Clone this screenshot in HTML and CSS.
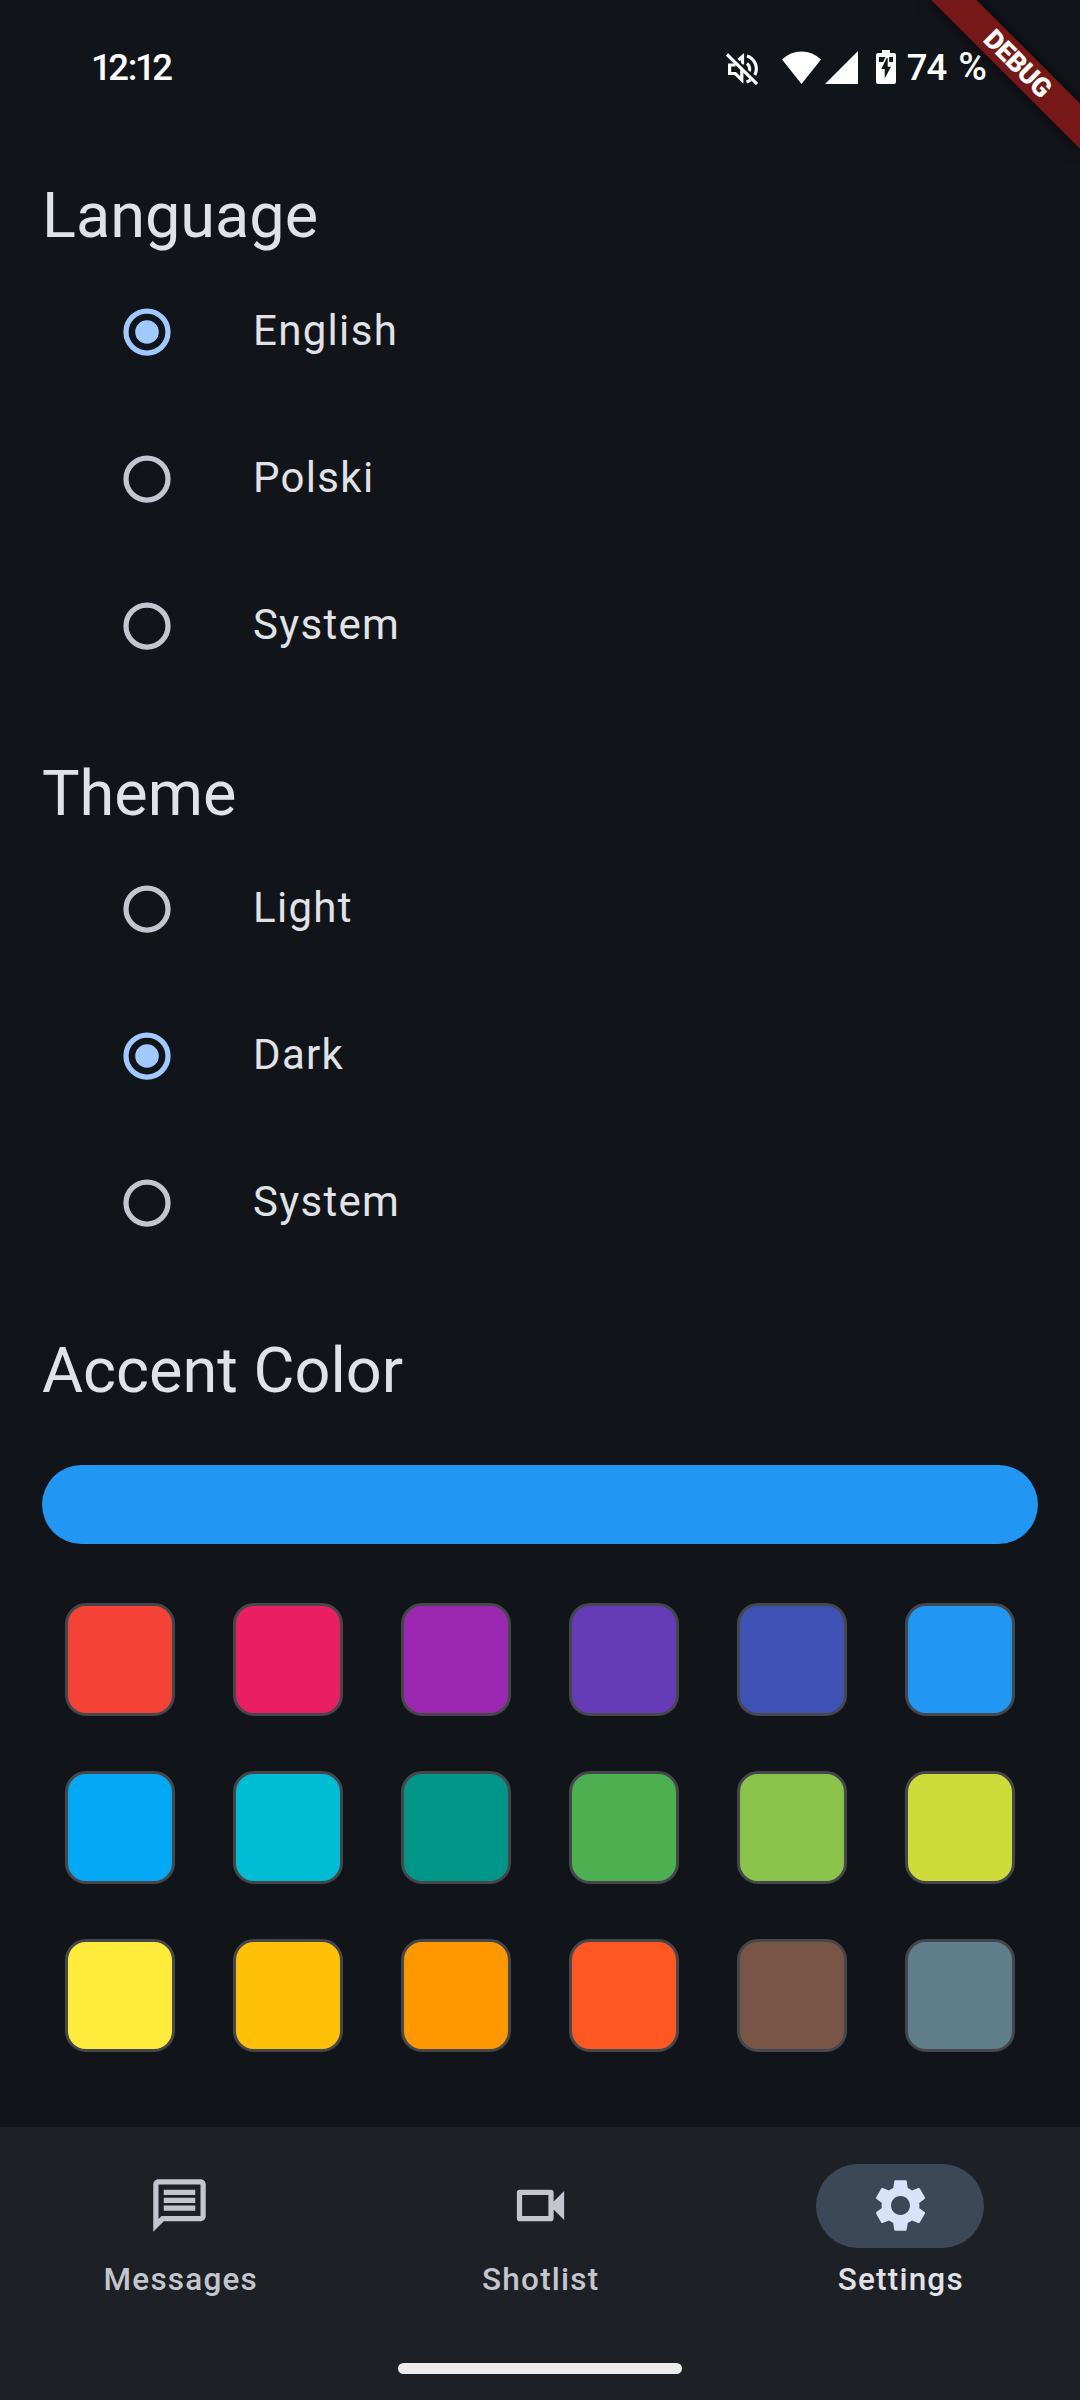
FILE: index.html
```html
<!DOCTYPE html>
<html lang="en">
<head>
<meta charset="utf-8">
<title>Settings</title>
<link rel="stylesheet" href="styles.css">
</head>
<body>
<svg width="0" height="0" class="symbols">
  <symbol id="radio-off" viewBox="0 0 48 48"><circle cx="24" cy="24" r="21" fill="none" stroke="#c3c6cf" stroke-width="5.25"/></symbol>
  <symbol id="radio-on" viewBox="0 0 48 48"><circle cx="24" cy="24" r="21" fill="none" stroke="#a0caff" stroke-width="5.25"/><circle cx="24" cy="24" r="11.8" fill="#a0caff"/></symbol>
</svg>
<div class="app">
  <header class="status">
    <span class="clock">12<span class="colon">:</span>12</span>
    <div class="status-icons">
      <svg class="mute" viewBox="0 0 32 32" fill="none" stroke="#fff" stroke-width="3.2">
        <path d="M9.500 12H3.600v8.500h5.700l6.500 6.500V16.500M12.500 7l4-3.500v8M21 10.500a7 7 0 0 1 2 8M21 3a13.500 13.500 0 0 1 7.800 19M20.500 29a14 14 0 0 0 4-2"/>
        <path d="M3 0l30 29.500" stroke="#111419" stroke-width="2.500"/>
        <path d="M1 1.500l30 29.500"/>
      </svg>
      <svg class="wifi" viewBox="0 0 39 33" fill="#fff"><path d="M0 8.500Q8.500 .5 19.500 .5T39 8.500L19.500 33z"/></svg>
      <svg class="signal" viewBox="0 0 33 33" fill="#fff"><path d="M33 0v33H0z"/></svg>
      <svg class="battery" viewBox="0 0 20 34"><path fill="#fff" d="M6 0h8v3h4a2 2 0 0 1 2 2v27a2 2 0 0 1-2 2H2a2 2 0 0 1-2-2V5a2 2 0 0 1 2-2h4z"/><path fill="#111419" d="M3 7h14v5H3z"/><path fill="#111419" stroke="#fff" stroke-width="3" paint-order="stroke" d="M10.700 8L5.300 19h3.400v9.500L15 16.700h-3.300V8z"/></svg>
      <span class="percent">74 <span class="sign">%</span></span>
    </div>
  </header>

  <main class="content">
    <section class="group">
      <h2>Language</h2>
      <label class="option"><svg class="radio"><use href="#radio-on"/></svg>English</label>
      <label class="option"><svg class="radio"><use href="#radio-off"/></svg>Polski</label>
      <label class="option"><svg class="radio"><use href="#radio-off"/></svg>System</label>
    </section>
    <section class="group">
      <h2>Theme</h2>
      <label class="option"><svg class="radio"><use href="#radio-off"/></svg>Light</label>
      <label class="option"><svg class="radio"><use href="#radio-on"/></svg>Dark</label>
      <label class="option"><svg class="radio"><use href="#radio-off"/></svg>System</label>
    </section>
    <section class="group">
      <h2>Accent Color</h2>
      <div class="preview"></div>
      <div class="swatches">
        <i class="red"></i><i class="pink"></i><i class="purple"></i><i class="deep-purple"></i><i class="indigo"></i><i class="blue"></i>
        <i class="light-blue"></i><i class="cyan"></i><i class="teal"></i><i class="green"></i><i class="light-green"></i><i class="lime"></i>
        <i class="yellow"></i><i class="amber"></i><i class="orange"></i><i class="deep-orange"></i><i class="brown"></i><i class="blue-grey"></i>
      </div>
    </section>
  </main>

  <nav class="nav">
    <div class="tabs">
      <a class="tab"><span class="pill"><svg viewBox="0 0 24 24"><path d="M4 4h16v12H5.170L4 17.170V4m0-2c-1.100 0-1.990.9-1.990 2L2 22l4-4h14c1.100 0 2-.9 2-2V4c0-1.100-.9-2-2-2H4zm2 10h12v2H6v-2zm0-3h12v2H6V9zm0-3h12v2H6V6z"/></svg></span><span class="label">Messages</span></a>
      <a class="tab"><span class="pill"><svg viewBox="0 0 24 24"><path d="M15 8v8H5V8h10m1-2H4c-.55 0-1 .45-1 1v10c0 .55.45 1 1 1h12c.55 0 1-.45 1-1v-3.500l4 4v-11l-4 4V7c0-.55-.45-1-1-1z"/></svg></span><span class="label">Shotlist</span></a>
      <a class="tab active"><span class="pill"><svg viewBox="0 0 24 24"><path d="M19.140 12.940c.04-.3.06-.61.06-.94 0-.32-.02-.64-.07-.94l2.030-1.580c.18-.14.23-.41.12-.61l-1.920-3.320c-.12-.22-.37-.29-.59-.22l-2.390.96c-.5-.38-1.030-.7-1.620-.94l-.36-2.540c-.04-.24-.24-.41-.48-.41h-3.840c-.24 0-.43.17-.47.41l-.36 2.540c-.59.24-1.130.57-1.620.94l-2.390-.96c-.22-.08-.47 0-.59.22L2.740 8.870c-.12.21-.08.47.12.61l2.030 1.580c-.05.3-.09.63-.09.94s.02.64.07.94l-2.030 1.580c-.18.14-.23.41-.12.61l1.920 3.320c.12.22.37.29.59.22l2.390-.96c.5.38 1.030.7 1.620.94l.36 2.540c.05.24.24.41.48.41h3.840c.24 0 .44-.17.47-.41l.36-2.540c.59-.24 1.130-.56 1.620-.94l2.390.96c.22.08.47 0 .59-.22l1.920-3.320c.12-.22.07-.47-.12-.61l-2.010-1.580zM12 15.600c-1.980 0-3.600-1.620-3.600-3.600s1.620-3.600 3.600-3.600 3.600 1.620 3.600 3.600-1.620 3.600-3.600 3.600z"/></svg></span><span class="label">Settings</span></a>
    </div>
    <div class="home-bar"></div>
  </nav>
  <div class="banner">DEBUG</div>
</div>
</body>
</html>
```
FILE: styles.css
```css
* { box-sizing: border-box; }
body { margin: 0; background: #111419; font-family: Roboto, sans-serif; color: #e1e2e8; }
.symbols { display: none; }
.app { position: relative; width: 1080px; height: 2400px; overflow: hidden; display: flex; flex-direction: column; }

.status { height: 131.25px; padding: 3px 94px 0 91px; display: flex; justify-content: space-between; align-items: center; color: #fff; font-size: 36.5px; font-weight: 500; }
.clock { letter-spacing: -3.4px; }
.colon { margin: 0 1px 0 2px; }
.status-icons { display: flex; align-items: center; }
.mute { width: 32px; height: 32px; margin: 4px 24px 0 0; }
.wifi { width: 39px; height: 33px; margin-right: 4px; }
.signal { width: 33px; height: 33px; margin-right: 18px; }
.battery { width: 20px; height: 34px; margin-right: 11px; }
.percent { white-space: nowrap; letter-spacing: -1px; word-spacing: 4px; }
.sign { font-size: 39px; }

.content { flex: 1; padding: 42px 42px 0; display: flex; flex-direction: column; gap: 52.5px; }
h2 { margin: 0; padding-top: 2px; height: 84px; font-size: 63px; line-height: 82px; font-weight: 400; }
.option { display: flex; align-items: center; height: 147px; padding: 0 0 .8px 81px; font-size: 42px; letter-spacing: 1.3125px; line-height: 63px; }
.radio { width: 48px; height: 48px; margin: 2.6px 82px 0 0; }

.preview { margin-top: 53px; height: 79px; border-radius: 40px; background: #2196f3; }
.swatches { margin: 58.5px 0 0 23px; display: grid; grid-template-columns: repeat(6, 110px); grid-auto-rows: 113px; gap: 55px 58px; }
.swatches i { border: 3px solid #46474c; border-radius: 21px; }
.red { background: #f44336; }
.pink { background: #e91e63; }
.purple { background: #9c27b0; }
.deep-purple { background: #673ab7; }
.indigo { background: #3f51b5; }
.blue { background: #2196f3; }
.light-blue { background: #03a9f4; }
.cyan { background: #00bcd4; }
.teal { background: #009688; }
.green { background: #4caf50; }
.light-green { background: #8bc34a; }
.lime { background: #cddc39; }
.yellow { background: #ffeb3b; }
.amber { background: #ffc107; }
.orange { background: #ff9800; }
.deep-orange { background: #ff5722; }
.brown { background: #795548; }
.blue-grey { background: #607d8b; }

.nav { height: 273px; background: #1d2024; display: flex; flex-direction: column; align-items: center; justify-content: space-between; padding-bottom: 26px; }
.tabs { width: 100%; display: grid; grid-template-columns: repeat(3, 1fr); padding-top: 36.75px; }
.tab { display: flex; flex-direction: column; align-items: center; gap: 11.25px; color: #c3c6cf; fill: #c3c6cf; font-size: 31.5px; line-height: 42px; font-weight: 500; letter-spacing: 1.2px; }
.label { padding-left: 1.5px; }
.pill { width: 168px; height: 84px; border-radius: 42px; display: grid; place-items: center; }
.pill svg { width: 63px; height: 63px; }
.tab:first-child svg { margin-right: 1px; }
.active { color: #e1e2e8; fill: #d7e3f8; }
.active .pill { background: #3c4858; }
.home-bar { width: 284px; height: 11px; border-radius: 5.5px; background: #ececec; }

.banner { position: absolute; left: 911.9px; top: 47.35px; width: 210px; height: 31.5px; padding-left: 2px; transform: rotate(45deg); background: #771818; box-shadow: 0 0 16px rgba(0, 0, 0, .5); color: #fff; font-size: 26.775px; line-height: 32px; font-weight: 900; letter-spacing: -.6px; text-align: center; }
```
